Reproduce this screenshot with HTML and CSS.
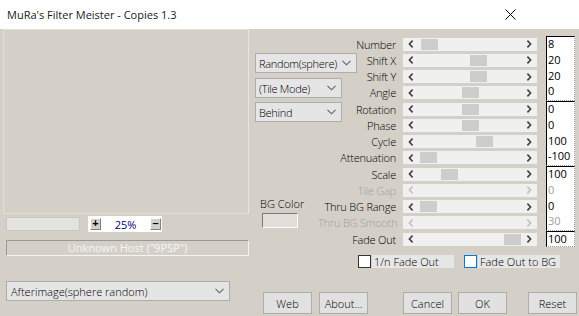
FILE: index.html
```html
<!DOCTYPE html>
<html>
<head>
<meta charset="utf-8">
<link rel="stylesheet" href="styles.css">
</head>
<body>
<div class="win">
  <div class="titlebar">
    <span class="title">MuRa's Filter Meister - Copies 1.3</span>
    <svg class="close" width="11" height="11" viewBox="0 0 11 11"><path d="M0.5 0.5L10.5 10.5M10.5 0.5L0.5 10.5" stroke="#000" stroke-width="1" fill="none"/></svg>
  </div>
  <div class="client">
    <div class="left">
      <div class="preview"></div>
      <div class="zoomrow">
        <div class="zoombox"></div>
        <div class="zoomctl"><span class="zbtn">+</span><span class="zval">25%</span><span class="zbtn">–</span></div>
      </div>
      <div class="host">Unknown Host ("9PSP")</div>
      <div class="combo combo-wide"><span>Afterimage(sphere random)</span><svg class="chev" width="9" height="6" viewBox="0 0 9 6"><path d="M0.5 0.8L4.5 4.8L8.5 0.8" stroke="#606060" stroke-width="1.1" fill="none"/></svg></div>
    </div>
    <div class="right">
      <div class="params">
        <div class="mid">
          <div class="combo c1"><span>Random(sphere)</span><svg class="chev" width="9" height="6" viewBox="0 0 9 6"><path d="M0.5 0.8L4.5 4.8L8.5 0.8" stroke="#606060" stroke-width="1.1" fill="none"/></svg></div>
          <div class="combo c2"><span>(Tile Mode)</span><svg class="chev" width="9" height="6" viewBox="0 0 9 6"><path d="M0.5 0.8L4.5 4.8L8.5 0.8" stroke="#606060" stroke-width="1.1" fill="none"/></svg></div>
          <div class="combo c3"><span>Behind</span><svg class="chev" width="9" height="6" viewBox="0 0 9 6"><path d="M0.5 0.8L4.5 4.8L8.5 0.8" stroke="#606060" stroke-width="1.1" fill="none"/></svg></div>
          <div class="bg-label">BG Color</div>
          <div class="bg-swatch"></div>
        </div>

        <div class="lbl">Number</div>
        <div class="sb"><span class="arr"><svg width="6" height="8" viewBox="0 0 6 8"><path d="M4.6 0.6L1.4 4L4.6 7.4" stroke="#404040" stroke-width="1.6" fill="none"/></svg></span><div class="track"><div class="thumb" style="margin-left:2px"></div></div><span class="arr"><svg width="6" height="8" viewBox="0 0 6 8"><path d="M1.4 0.6L4.6 4L1.4 7.4" stroke="#404040" stroke-width="1.6" fill="none"/></svg></span></div>

        <div class="lbl">Shift X</div>
        <div class="sb"><span class="arr"><svg width="6" height="8" viewBox="0 0 6 8"><path d="M4.6 0.6L1.4 4L4.6 7.4" stroke="#404040" stroke-width="1.6" fill="none"/></svg></span><div class="track"><div class="thumb" style="margin-left:51px"></div></div><span class="arr"><svg width="6" height="8" viewBox="0 0 6 8"><path d="M1.4 0.6L4.6 4L1.4 7.4" stroke="#404040" stroke-width="1.6" fill="none"/></svg></span></div>

        <div class="lbl">Shift Y</div>
        <div class="sb"><span class="arr"><svg width="6" height="8" viewBox="0 0 6 8"><path d="M4.6 0.6L1.4 4L4.6 7.4" stroke="#404040" stroke-width="1.6" fill="none"/></svg></span><div class="track"><div class="thumb" style="margin-left:51px"></div></div><span class="arr"><svg width="6" height="8" viewBox="0 0 6 8"><path d="M1.4 0.6L4.6 4L1.4 7.4" stroke="#404040" stroke-width="1.6" fill="none"/></svg></span></div>

        <div class="lbl">Angle</div>
        <div class="sb"><span class="arr"><svg width="6" height="8" viewBox="0 0 6 8"><path d="M4.6 0.6L1.4 4L4.6 7.4" stroke="#404040" stroke-width="1.6" fill="none"/></svg></span><div class="track"><div class="thumb" style="margin-left:43px"></div></div><span class="arr"><svg width="6" height="8" viewBox="0 0 6 8"><path d="M1.4 0.6L4.6 4L1.4 7.4" stroke="#404040" stroke-width="1.6" fill="none"/></svg></span></div>

        <div class="lbl">Rotation</div>
        <div class="sb"><span class="arr"><svg width="6" height="8" viewBox="0 0 6 8"><path d="M4.6 0.6L1.4 4L4.6 7.4" stroke="#404040" stroke-width="1.6" fill="none"/></svg></span><div class="track"><div class="thumb" style="margin-left:43px"></div></div><span class="arr"><svg width="6" height="8" viewBox="0 0 6 8"><path d="M1.4 0.6L4.6 4L1.4 7.4" stroke="#404040" stroke-width="1.6" fill="none"/></svg></span></div>

        <div class="lbl">Phase</div>
        <div class="sb"><span class="arr"><svg width="6" height="8" viewBox="0 0 6 8"><path d="M4.6 0.6L1.4 4L4.6 7.4" stroke="#404040" stroke-width="1.6" fill="none"/></svg></span><div class="track"><div class="thumb" style="margin-left:43px"></div></div><span class="arr"><svg width="6" height="8" viewBox="0 0 6 8"><path d="M1.4 0.6L4.6 4L1.4 7.4" stroke="#404040" stroke-width="1.6" fill="none"/></svg></span></div>

        <div class="lbl">Cycle</div>
        <div class="sb"><span class="arr"><svg width="6" height="8" viewBox="0 0 6 8"><path d="M4.6 0.6L1.4 4L4.6 7.4" stroke="#404040" stroke-width="1.6" fill="none"/></svg></span><div class="track"><div class="thumb" style="margin-left:57px"></div></div><span class="arr"><svg width="6" height="8" viewBox="0 0 6 8"><path d="M1.4 0.6L4.6 4L1.4 7.4" stroke="#404040" stroke-width="1.6" fill="none"/></svg></span></div>

        <div class="lbl">Attenuation</div>
        <div class="sb"><span class="arr"><svg width="6" height="8" viewBox="0 0 6 8"><path d="M4.6 0.6L1.4 4L4.6 7.4" stroke="#404040" stroke-width="1.6" fill="none"/></svg></span><div class="track"><div class="thumb" style="margin-left:1px"></div></div><span class="arr"><svg width="6" height="8" viewBox="0 0 6 8"><path d="M1.4 0.6L4.6 4L1.4 7.4" stroke="#404040" stroke-width="1.6" fill="none"/></svg></span></div>

        <div class="lbl">Scale</div>
        <div class="sb"><span class="arr"><svg width="6" height="8" viewBox="0 0 6 8"><path d="M4.6 0.6L1.4 4L4.6 7.4" stroke="#404040" stroke-width="1.6" fill="none"/></svg></span><div class="track"><div class="thumb" style="margin-left:22px"></div></div><span class="arr"><svg width="6" height="8" viewBox="0 0 6 8"><path d="M1.4 0.6L4.6 4L1.4 7.4" stroke="#404040" stroke-width="1.6" fill="none"/></svg></span></div>

        <div class="lbl dis">Tile Gap</div>
        <div class="sb off"><span class="arr"><svg width="6" height="8" viewBox="0 0 6 8"><path d="M4.6 0.6L1.4 4L4.6 7.4" stroke="#c0c0c0" stroke-width="1.6" fill="none"/></svg></span><div class="track"></div><span class="arr"><svg width="6" height="8" viewBox="0 0 6 8"><path d="M1.4 0.6L4.6 4L1.4 7.4" stroke="#c0c0c0" stroke-width="1.6" fill="none"/></svg></span></div>

        <div class="lbl">Thru BG Range</div>
        <div class="sb"><span class="arr"><svg width="6" height="8" viewBox="0 0 6 8"><path d="M4.6 0.6L1.4 4L4.6 7.4" stroke="#404040" stroke-width="1.6" fill="none"/></svg></span><div class="track"><div class="thumb" style="margin-left:1px"></div></div><span class="arr"><svg width="6" height="8" viewBox="0 0 6 8"><path d="M1.4 0.6L4.6 4L1.4 7.4" stroke="#404040" stroke-width="1.6" fill="none"/></svg></span></div>

        <div class="lbl dis">Thru BG Smooth</div>
        <div class="sb off"><span class="arr"><svg width="6" height="8" viewBox="0 0 6 8"><path d="M4.6 0.6L1.4 4L4.6 7.4" stroke="#c0c0c0" stroke-width="1.6" fill="none"/></svg></span><div class="track"></div><span class="arr"><svg width="6" height="8" viewBox="0 0 6 8"><path d="M1.4 0.6L4.6 4L1.4 7.4" stroke="#c0c0c0" stroke-width="1.6" fill="none"/></svg></span></div>

        <div class="lbl">Fade Out</div>
        <div class="sb"><span class="arr"><svg width="6" height="8" viewBox="0 0 6 8"><path d="M4.6 0.6L1.4 4L4.6 7.4" stroke="#404040" stroke-width="1.6" fill="none"/></svg></span><div class="track"><div class="thumb" style="margin-left:85px"></div></div><span class="arr"><svg width="6" height="8" viewBox="0 0 6 8"><path d="M1.4 0.6L4.6 4L1.4 7.4" stroke="#404040" stroke-width="1.6" fill="none"/></svg></span></div>

        <div class="eg g1"><span>8</span><span>20</span><span>20</span><span>0</span></div>
        <div class="eg g2"><span>0</span><span>0</span><span>100</span><span>-100</span></div>
        <div class="eg g3"><span>100</span><span class="dis">0</span><span>0</span><span class="dis">30</span></div>
        <div class="eg g4"><span>100</span></div>
      </div>

      <div class="checks">
        <div class="chk"><span class="box"></span><span class="ctext">1/n Fade Out</span></div>
        <div class="chk chk2"><span class="box focus"></span><span class="ctext">Fade Out to BG</span></div>
      </div>

      <div class="buttons">
        <span class="btn">Web</span>
        <span class="btn b-about">About...</span>
        <span class="btn b-cancel">Cancel</span>
        <span class="btn b-ok">OK</span>
        <span class="btn b-reset">Reset</span>
      </div>
    </div>
  </div>
</div>
</body>
</html>
```

FILE: styles.css
```css
* { box-sizing: border-box; }
html, body { margin: 0; padding: 0; }
body {
  width: 579px;
  height: 316px;
  overflow: hidden;
  background: #d4d0c8;
  font-family: "Open Sans", "Liberation Sans", Arial, sans-serif;
  font-size: 10px;
  font-weight: 300;
  color: #000;
}
.win { width: 579px; height: 316px; display: flex; flex-direction: column; }

.titlebar {
  height: 29px;
  flex: none;
  background: #fff;
  display: flex;
  align-items: center;
  justify-content: space-between;
  padding: 0 63px 0 7px;
}
.title { font-family: "Open Sans", "Noto Sans", sans-serif; font-size: 11px; font-weight: 400; color: #1a1a1a; }
.close { display: block; }

.client { flex: 1; display: flex; padding: 0 0 0 3px; }

.left { width: 246px; flex: none; display: flex; flex-direction: column; }
.preview { height: 185px; border: 1px solid #e2dfd9; border-right-color: #e8e6e1; }
.zoomrow { display: flex; align-items: center; height: 16px; margin-top: 2px; padding-left: 3px; }
.zoombox { width: 74px; height: 14px; background: #e5e3df; border: 1px solid #c9c6c0; }
.zoomctl {
  margin-left: 8px; width: 74px; height: 16px; background: #fff;
  display: flex; align-items: center; padding: 0 1px 0 2px;
}
.zbtn {
  width: 11px; height: 12px; background: #d4d0c8;
  border: 1px solid; border-color: #fff #808080 #808080 #fff;
  font-family: "Liberation Sans", Arial, sans-serif;
  font-size: 11px; line-height: 9px; text-align: center; font-weight: bold;
}
.zval { flex: 1; text-align: center; color: #000080; font-size: 11px; font-weight: 400; }
.host {
  margin: 8px 0 0 3px; height: 16px;
  border: 1px solid; border-color: #9c9a96 #f4f4f4 #f4f4f4 #9c9a96;
  color: #f6f6f6; text-align: center; line-height: 14px; font-size: 11px; font-weight: 400;
}

.combo {
  height: 20px; background: #e5e5e5; border: 1px solid #adadad;
  display: flex; align-items: center; justify-content: space-between;
  padding: 0 5px 0 3px; white-space: nowrap; font-size: 11px; letter-spacing: -0.3px;
}
.chev { display: block; flex: none; }
.combo-wide { margin: 25px 0 0 3px; width: 224px; padding-right: 5px; padding-left: 4px; letter-spacing: 0; }

.right { margin-left: 6px; flex: 1; display: flex; flex-direction: column; }
.params {
  margin-top: 7px;
  display: grid;
  grid-template-columns: 63px 85px 143px 29px;
  grid-template-rows: repeat(13, 16.25px);
}
.mid { grid-column: 1; grid-row: 1 / 14; display: flex; flex-direction: column; }
.c1 { width: 102px; margin-top: 17px; }
.c2 { width: 87px; margin-top: 5px; }
.c3 { width: 87px; margin-top: 4px; }
.bg-label { margin: 76px 0 0 5px; line-height: 12px; font-size: 11px; }
.bg-swatch {
  margin: 3px 0 0 7px; width: 36px; height: 15px; background: #e2dfda;
  border: 1px solid; border-color: #7a7a7a #fff #fff #7a7a7a;
}

.lbl {
  grid-column: 2; align-self: center; text-align: right; padding-right: 7px;
  white-space: nowrap; line-height: 13px; font-size: 11px; letter-spacing: -0.2px;
}
.dis { color: #a0a0a0; }
.sb {
  grid-column: 3; align-self: center; width: 134px; height: 13px;
  background: #f0f0f0; display: flex;
}
.arr { width: 16px; height: 13px; display: flex; align-items: center; justify-content: center; flex: none; }
.arr svg { display: block; }
.track { flex: 1; height: 13px; }
.thumb { width: 17px; height: 11px; margin-top: 1px; background: #cdcdcd; }

.eg {
  grid-column: 4; background: #fff;
  border-left: 1px solid #000; border-top: 1px solid #000;
  border-right: 1px dotted #9a9a9a; border-bottom: 1px dotted #9a9a9a;
  display: flex; flex-direction: column; font-size: 11px; font-weight: 400;
}
.eg span { flex: 1; padding-left: 1px; line-height: 13px; }
.g1 { grid-row: 1 / 5; }
.g2 { grid-row: 5 / 9; }
.g3 { grid-row: 9 / 13; }
.g4 { grid-row: 13 / 14; }

.checks { display: flex; align-items: center; margin-top: 8px; padding-left: 103px; height: 13px; }
.chk { display: flex; align-items: center; }
.chk2 { margin-left: 10px; }
.box { width: 13px; height: 13px; background: #fff; border: 1px solid #333; flex: none; }
.box.focus { border-color: #0078d7; }
.ctext { width: 82px; height: 13px; background: #e6e6e6; padding-left: 2px; line-height: 13px; margin-left: 1px; font-size: 11px; }

.buttons { display: flex; margin-top: 24px; padding-left: 8px; }
.btn {
  width: 49px; height: 22px; background: #e1e1e1; border: 1px solid #adadad;
  display: flex; align-items: center; justify-content: center;
  flex: none; font-size: 11px;
}
.b-about { margin-left: 7px; }
.b-cancel { margin-left: 35px; }
.b-ok { margin-left: 6px; }
.b-reset { margin-left: 21px; }
```
